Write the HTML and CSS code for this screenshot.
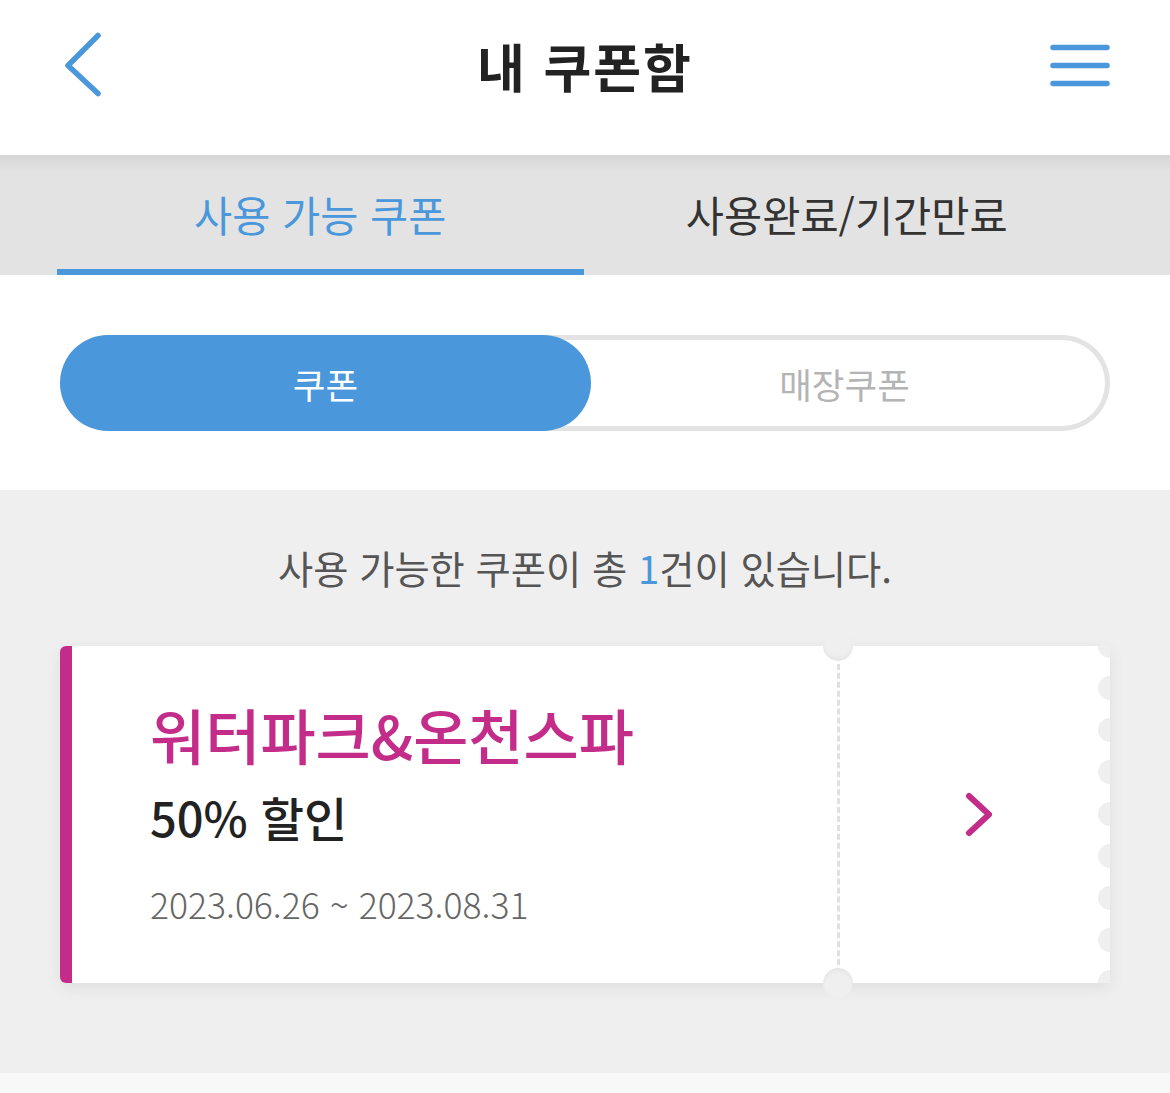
FILE: index.html
```html
<!DOCTYPE html>
<html lang="ko">
<head>
<meta charset="utf-8">
<title>내 쿠폰함</title>
<link rel="stylesheet" href="styles.css">
</head>
<body>
<div class="page">
  <header class="topbar">
    <svg class="icon" width="60" height="70" viewBox="0 0 60 70" aria-label="뒤로">
      <polyline points="38,4.5 8,34.5 38,62.5" fill="none" stroke="#4a98db" stroke-width="5.5" stroke-linecap="round" stroke-linejoin="round"/>
    </svg>
    <h1 class="title">내 쿠폰함</h1>
    <svg class="icon" width="60" height="70" viewBox="0 0 60 70" aria-label="메뉴">
      <g stroke="#4a98db" stroke-width="5.5" stroke-linecap="round">
        <line x1="3" y1="16.5" x2="57" y2="16.5"/>
        <line x1="3" y1="34.5" x2="57" y2="34.5"/>
        <line x1="3" y1="52.5" x2="57" y2="52.5"/>
      </g>
    </svg>
  </header>

  <nav class="tabs">
    <div class="tab active">사용 가능 쿠폰</div>
    <div class="tab">사용완료/기간만료</div>
  </nav>

  <section class="filter">
    <div class="toggle">
      <div class="toggle-btn on">쿠폰</div>
      <div class="toggle-btn off">매장쿠폰</div>
    </div>
  </section>

  <section class="list">
    <p class="count">사용 가능한 쿠폰이 총 <span class="num">1</span>건이 있습니다.</p>
    <div class="coupon">
      <div class="coupon-main">
        <div class="coupon-name">워터파크&amp;온천스파</div>
        <div class="coupon-benefit">50% 할인</div>
        <div class="coupon-date">2023.06.26 ~ 2023.08.31</div>
      </div>
      <div class="coupon-side">
        <svg width="40" height="50" viewBox="0 0 40 50" aria-label="상세">
          <polyline points="9,6 29,24.5 9,43" fill="none" stroke="#c42c8a" stroke-width="6" stroke-linecap="round" stroke-linejoin="round"/>
        </svg>
        <span class="notch notch-top"></span>
        <span class="notch notch-bottom"></span>
      </div>
      <span class="scallop"></span>
    </div>
  </section>
  <footer class="foot"></footer>
</div>
</body>
</html>
```

FILE: styles.css
```css
* { box-sizing: border-box; }
html, body { margin: 0; padding: 0; }
body {
  font-family: "Noto Sans CJK KR", "Noto Sans", sans-serif;
  background: #f8f8f8;
  width: 1170px;
}
.page { width: 1170px; }

.topbar {
  height: 155px;
  padding: 0 60px 24px;
  display: flex;
  align-items: center;
  justify-content: space-between;
  background: #fff;
}
.icon { display: block; }
.title {
  margin: 0;
  font-size: 52px;
  font-weight: 700;
  letter-spacing: 2px;
  color: #222;
  line-height: 60px;
}

.tabs {
  height: 120px;
  padding: 0 60px;
  display: flex;
  background: linear-gradient(#d6d6d6 0, #e3e3e3 18px, #e3e3e3 100%);
}
.tab {
  flex: 1;
  display: flex;
  align-items: center;
  justify-content: center;
  padding-top: 4px;
  font-size: 41.5px;
  color: #333;
  border-bottom: 6px solid transparent;
}
.tab.active {
  color: #4a98db;
  border-bottom-color: #4a98db;
  margin-left: -3px;
}

.filter {
  background: #fff;
  padding: 60px 60px 59px;
}
.toggle {
  height: 96px;
  border-radius: 48px;
  box-shadow: inset 0 0 0 5px #e3e3e3;
  display: grid;
  grid-template-columns: 531px 1fr;
}
.toggle-btn {
  display: flex;
  align-items: center;
  justify-content: center;
  font-size: 35.5px;
  color: #b4b4b4;
  border-radius: 48px;
}
.toggle-btn.off { padding-right: 12px; }
.toggle-btn.on {
  background: #4a98db;
  color: #fff;
}

.list {
  background: #efefef;
  padding: 53px 60px 90px;
}
.count {
  margin: 0 0 53px;
  text-align: center;
  font-size: 38.3px;
  line-height: 50px;
  color: #555;
}
.num { color: #4a98db; }

.coupon {
  position: relative;
  height: 337px;
  display: flex;
  background: #fff;
  border-left: 12px solid #c42c8a;
  border-radius: 6px 0 0 6px;
  box-shadow: 0 5px 16px rgba(0, 0, 0, 0.07);
}
.coupon-main {
  width: 765px;
  padding: 53px 0 0 78px;
}
.coupon-name {
  font-size: 60px;
  font-weight: 500;
  line-height: 70px;
  color: #c42c8a;
}
.coupon-benefit {
  margin-top: 18px;
  font-size: 47px;
  font-weight: 500;
  line-height: 60px;
  color: #222;
}
.coupon-date {
  margin-top: 34px;
  font-size: 35.5px;
  font-weight: 300;
  line-height: 46px;
  color: #666;
}
.coupon-side {
  position: relative;
  flex: 1;
  display: flex;
  align-items: center;
  justify-content: center;
  border-left: 3px dashed #e0e0e0;
  padding-left: 10px;
}
.notch {
  position: absolute;
  left: -17px;
  width: 30px;
  height: 30px;
  border-radius: 50%;
  background: #efefef;
}
.notch-top { top: -15px; box-shadow: inset 0 -3px 4px rgba(0,0,0,0.04); }
.notch-bottom { bottom: -15px; box-shadow: inset 0 3px 4px rgba(0,0,0,0.04); }

.scallop {
  position: absolute;
  top: 0;
  right: 0;
  width: 12px;
  height: 100%;
  background-image: radial-gradient(circle at 100% 50%, #efefef 11.5px, rgba(239,239,239,0) 12.5px);
  background-size: 12px 42px;
  background-position: 0 -21px;
}

.foot {
  height: 20px;
  background: #f8f8f8;
}
```
